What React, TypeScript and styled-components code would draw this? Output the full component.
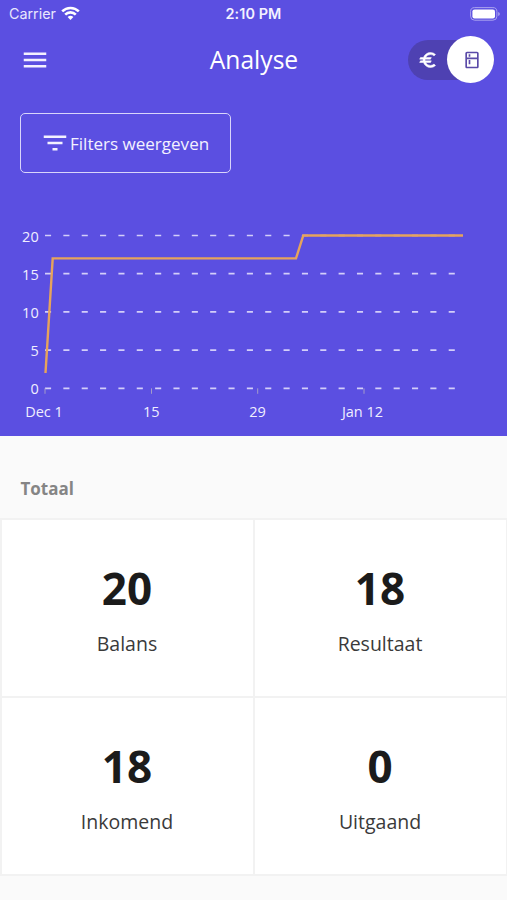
import React from "react";
import styled, { createGlobalStyle } from "styled-components";
import { MdMenu, MdFilterList, MdEuro, MdOutlineKitchen } from "react-icons/md";

const GlobalStyle = createGlobalStyle`
  * { box-sizing: border-box; }
  body { margin: 0; background: #fafafa; font-family: "Open Sans", sans-serif; }
`;

const Screen = styled.div`
  width: 507px;
  height: 900px;
  overflow: hidden;
  display: flex;
  flex-direction: column;
  background: #fafafa;
`;

const Hero = styled.header`
  height: 435.5px;
  flex: none;
  display: flex;
  flex-direction: column;
  background: #5b4fe1;
  color: #fff;
`;

const StatusBar = styled.div`
  height: 27px;
  display: grid;
  grid-template-columns: 1fr auto 1fr;
  align-items: center;
  padding: 0 7px 0 9px;
  font-family: Inter, sans-serif;
  line-height: 27px;
`;

const Carrier = styled.div`
  display: flex;
  align-items: center;
  gap: 5.5px;
  font-size: 14.3px;
  color: #e9e7fd;
`;

const Clock = styled.div`
  margin-right: 2px;
  font-size: 14.4px;
  font-weight: 600;
  letter-spacing: 0.1px;
  color: #f3f1ff;
`;

const BatteryIcon = styled.svg`
  justify-self: end;
`;

const AppBar = styled.nav`
  height: 65px;
  display: grid;
  grid-template-columns: 1fr auto 1fr;
  align-items: center;
  padding: 0 13px 0 20px;
`;

const IconButton = styled.button`
  width: 30px;
  height: 30px;
  padding: 0;
  border: 0;
  background: none;
  color: #f3f1ff;
  display: flex;
`;

const Title = styled.h1`
  margin: 1px 6px 0 0;
  font-size: 24.6px;
  line-height: 34px;
  font-weight: 400;
`;

const Toggle = styled.div`
  justify-self: end;
  width: 86px;
  height: 40px;
  border-radius: 20px;
  background: #4e41b2;
  display: flex;
  align-items: center;
  justify-content: space-between;
  padding-left: 10px;
`;

const EuroIcon = styled(MdEuro)`
  path:not([fill="none"]) {
    stroke: currentColor;
    stroke-width: 0.6px;
  }
`;

const Thumb = styled.div`
  width: 47px;
  height: 47px;
  flex: none;
  border-radius: 50%;
  background: #fff;
  color: #5a4aa8;
  display: flex;
  align-items: center;
  justify-content: center;
  padding-left: 2px;
`;

const FilterButton = styled.button`
  margin: 20.5px 0 0 19.5px;
  width: 211px;
  height: 60px;
  flex: none;
  display: flex;
  align-items: center;
  padding: 0 0 0 19.5px;
  border: 1.5px solid #d9d5fb;
  border-radius: 5px;
  background: none;
  color: #f3f1ff;
  font-family: inherit;
  font-size: 17.05px;
  white-space: nowrap;
`;

const FilterLabel = styled.span`
  padding-top: 1px;
`;

const Chart = styled.svg`
  margin-top: 47px;
  flex: none;
  display: block;
  font-family: "Open Sans", sans-serif;
  font-size: 14.5px;
  fill: #f0eeff;
`;

const SectionTitle = styled.h2`
  margin: 0;
  height: 82px;
  flex: none;
  padding: 41px 0 0 20.5px;
  font-size: 17px;
  line-height: 24px;
  font-weight: 700;
  color: #858585;
`;

const StatGrid = styled.main`
  flex: none;
  height: 358.5px;
  display: grid;
  grid-template-columns: 1fr 1fr;
  grid-template-rows: 1fr 1fr;
  gap: 2px;
  padding: 2px 1.5px;
  background: #f2f2f2;
`;

const StatCard = styled.section`
  background: #fff;
  display: flex;
  flex-direction: column;
  align-items: center;
  padding-top: 37px;
`;

const StatValue = styled.strong`
  font-size: 44px;
  line-height: 62px;
  font-weight: 700;
  color: #1b1b1b;
`;

const StatLabel = styled.span`
  margin-top: 11px;
  font-size: 19.5px;
  line-height: 28px;
  color: #3a3a3a;
`;

const yTicks = [20, 15, 10, 5, 0];
const xTicks = [
  { x: 45, textX: 44, label: "Dec 1" },
  { x: 151.5, textX: 151.3, label: "15" },
  { x: 257.7, textX: 257.5, label: "29" },
  { x: 364, textX: 362.5, label: "Jan 12" },
];
const stats = [
  { value: "20", label: "Balans" },
  { value: "18", label: "Resultaat" },
  { value: "18", label: "Inkomend" },
  { value: "0", label: "Uitgaand" },
];

const CHART_TOP = 220;
const yOf = (value: number) => 388.3 - CHART_TOP - value * 7.64;

function BalanceChart() {
  return (
    <Chart width="507" height="210" viewBox="0 0 507 210">
      {yTicks.map((tick) => (
        <g key={tick}>
          <text x="38.7" y={yOf(tick) + 6} textAnchor="end">
            {tick}
          </text>
          <line
            x1="45"
            x2="462"
            y1={yOf(tick)}
            y2={yOf(tick)}
            stroke="#d3cef9"
            strokeWidth="1.7"
            strokeDasharray="6.1 12.25"
          />
        </g>
      ))}
      {xTicks.map((tick) => (
        <g key={tick.label}>
          <line x1={tick.x} x2={tick.x} y1={yOf(0)} y2={yOf(0) + 5.5} stroke="#a39bc9" />
          <text x={tick.textX} y="196.6" textAnchor="middle">
            {tick.label}
          </text>
        </g>
      ))}
      <polyline
        points={`45.5,${yOf(2)} 52.7,${yOf(17)} 296,${yOf(17)} 303.3,${yOf(20)} 463,${yOf(20)}`}
        fill="none"
        stroke="#e6a35c"
        strokeWidth="2.4"
      />
    </Chart>
  );
}

function WifiIcon() {
  return (
    <svg width="19" height="15" viewBox="0 0 19 15" fill="none" stroke="#fff" strokeWidth="2.6">
      <path d="M1.2 5.4a11.8 11.8 0 0 1 16.6 0" />
      <path d="M4.2 8.6a7.5 7.5 0 0 1 10.6 0" />
      <path d="M6.6 11.1a4.2 4.2 0 0 1 5.8 0L9.5 14z" fill="#fff" stroke="none" />
    </svg>
  );
}

export default function App() {
  return (
    <Screen>
      <GlobalStyle />
      <Hero>
        <StatusBar>
          <Carrier>
            Carrier
            <WifiIcon />
          </Carrier>
          <Clock>2:10 PM</Clock>
          <BatteryIcon width="30" height="14" viewBox="0 0 30 14">
            <rect x="0.6" y="0.6" width="26.3" height="12.6" rx="4" fill="none" stroke="#aaa3ef" />
            <rect x="2.4" y="2.4" width="22.6" height="9" rx="2.2" fill="#fff" />
            <path d="M28.2 5v4q1.6-.6 1.6-2t-1.6-2z" fill="#aaa3ef" />
          </BatteryIcon>
        </StatusBar>
        <AppBar>
          <IconButton aria-label="Menu">
            <MdMenu size={30} />
          </IconButton>
          <Title>Analyse</Title>
          <Toggle>
            <EuroIcon size={20} />
            <Thumb>
              <MdOutlineKitchen size={20} />
            </Thumb>
          </Toggle>
        </AppBar>
        <FilterButton>
          <MdFilterList size={30} />
          <FilterLabel>Filters weergeven</FilterLabel>
        </FilterButton>
        <BalanceChart />
      </Hero>
      <SectionTitle>Totaal</SectionTitle>
      <StatGrid>
        {stats.map((stat) => (
          <StatCard key={stat.label}>
            <StatValue>{stat.value}</StatValue>
            <StatLabel>{stat.label}</StatLabel>
          </StatCard>
        ))}
      </StatGrid>
    </Screen>
  );
}
